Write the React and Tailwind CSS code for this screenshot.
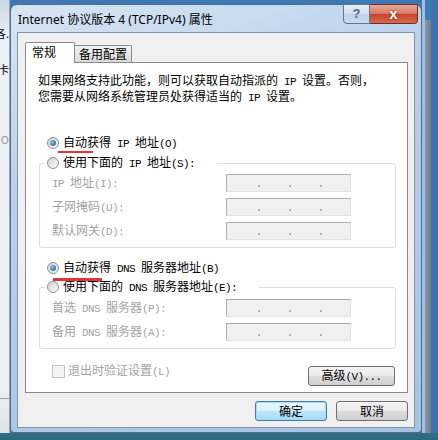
import React from 'react';

// SimSun-ish text: ascii runs are half width, CJK full width
const Txt = ({ children }) => {
  const parts = String(children).split(/([\x00-\x7F]+)/).filter(Boolean);
  return parts.map((p, i) =>
    /^[\x00-\x7F]+$/.test(p) ? (
      <span key={i} className="font-['Liberation_Mono',monospace] text-[11px] tracking-[-0.6px] whitespace-pre">
        {p}
      </span>
    ) : (
      <span key={i}>{p}</span>
    )
  );
};

const Radio = ({ checked }) => (
  <span className="w-[12px] h-[12px] rounded-full border border-[#8e8f8f] bg-[linear-gradient(135deg,#d2d2d2,#fbfbfb)] flex items-center justify-center shrink-0">
    {checked && (
      <span className="w-[6px] h-[6px] rounded-full bg-[radial-gradient(circle_at_35%_35%,#8cc3ee,#1a4f86)]" />
    )}
  </span>
);

const IpBox = () => (
  <div className="w-[125px] h-[18px] border border-[#a9acb2] border-r-[#dfe3e8] border-b-[#dfe3e8] bg-[#f0f0f0] flex pl-[2px]">
    {[0, 1, 2].map((i) => (
      <div key={i} className="w-[31px] flex justify-end items-end pb-[4px]">
        <span className="w-[2px] h-[2px] bg-[#b4b4b4]" />
      </div>
    ))}
  </div>
);

const Row = ({ label }) => (
  <div className="flex items-center h-[18px] pl-[12px]">
    <div className="w-[174px] text-[#a3a3a3]">
      <Txt>{label}</Txt>
    </div>
    <IpBox />
  </div>
);

const WinButton = ({ children, focused, className }) => (
  <button
    className={
      focused
        ? `h-[20px] rounded-[3px] border border-[#3c7fb1] bg-[linear-gradient(#eaf6fd,#d9f0fc_50%,#bee6fd_51%,#a7d9f5)] shadow-[0_0_0_1px_#a8d8f4_inset] text-black ${className}`
        : `h-[20px] rounded-[3px] border border-[#707070] bg-[linear-gradient(#f2f2f2,#ebebeb_50%,#dddddd_51%,#cfcfcf)] text-black ${className}`
    }
  >
    {children}
  </button>
);

const App = () => {
  return (
    <div className="w-[438px] h-[440px] overflow-hidden flex flex-col bg-[#3f78b2] font-['Noto_Sans_CJK_SC',sans-serif] text-[12px] leading-[14px] text-black">
      <div className="flex h-[433px]">
        {/* window behind, left edge */}
        <div className="w-[10px] bg-[linear-gradient(#c9d6e4,#eceff3_8%,#eceff3_90%,#dde3ea)] border-r border-[#9aa9ba] flex flex-col overflow-hidden">
          <div className="mt-[26px] flex justify-end whitespace-nowrap text-[11px]">网络各.</div>
          <div className="mt-[22px] flex justify-end whitespace-nowrap text-[11px]">关闭卡</div>
          <div className="mt-[56px] flex justify-end whitespace-nowrap text-[#9a9a9a] text-[11px]">O</div>
          <div className="mt-[252px] h-px bg-[#9c9c9c]" />
        </div>

        <div className="pt-[4px]">
          <div className="w-[412px] h-[429px] rounded-t-[7px] rounded-b-[4px] border border-[#4d6c90] bg-[linear-gradient(160deg,#d6e5f4,#b9d0e9_35%,#a7c3e2)] flex flex-col pb-[4px]">
            {/* title bar */}
            <div className="h-[27px] flex items-start pl-[7px] pr-[3px] shrink-0">
              <div className="pt-[8px] font-['Noto_Sans','Noto_Sans_CJK_SC',sans-serif] text-[12px] leading-[14px]">
                Internet 协议版本 4 (TCP/IPv4) 属性
              </div>
              <div className="ml-auto -mt-[1px] flex">
                <div className="w-[27px] h-[20px] rounded-bl-[4px] border border-[#5f7590] bg-[linear-gradient(#e6eef8,#d3e1f0_50%,#bfd2e8_51%,#c9dbef)] flex items-center justify-center font-['Liberation_Sans',sans-serif] font-bold text-[13px] text-[#58697e]">
                  ?
                </div>
                <div className="w-[48px] h-[20px] rounded-br-[4px] border border-l-0 border-[#6b3128] bg-[linear-gradient(#e8a899,#d9775f_50%,#c7432b_51%,#d7694d)] flex items-center justify-center font-['Liberation_Sans',sans-serif] font-bold text-[15px] text-white [text-shadow:0_0_2px_#5a1a10]">
                  x
                </div>
              </div>
            </div>

            {/* client area */}
            <div className="flex-1 mx-[6px] border border-[#7f95ad] bg-[#f0f0f0] flex flex-col pt-[9px] pl-[7px] pr-[6px]">
              {/* tabs */}
              <div className="h-[20px] flex items-end">
                <div className="w-[50px] h-[21px] -mb-[1px] relative z-10 bg-white border-x border-t border-[#898c95] rounded-t-[2px] pl-[6px] pt-[2px]">
                  常规
                </div>
                <div className="w-[57px] h-[17px] border-t border-r border-[#898c95] rounded-tr-[2px] bg-[linear-gradient(#f3f3f3,#e6e6e6_50%,#d9d9d9)] pl-[4px] pt-[1px]">
                  备用配置
                </div>
              </div>

              {/* panel */}
              <div className="h-[331px] border border-[#898c95] bg-white flex flex-col pt-[10px]">
                <div className="pl-[12px] leading-[13px]">
                  <div>
                    <Txt>如果网络支持此功能，则可以获取自动指派的 IP 设置。否则，</Txt>
                  </div>
                  <div>
                    <Txt>您需要从网络系统管理员处获得适当的 IP 设置。</Txt>
                  </div>
                </div>

                <div className="relative mt-[31px] ml-[21px] h-[14px] flex items-center gap-[4px]">
                  <Radio checked />
                  <span>
                    <Txt>自动获得 IP 地址(O)</Txt>
                  </span>
                  <span className="absolute left-[11px] top-[15px] w-[35px] h-[2px] bg-[#e0363a]" />
                </div>

                <fieldset className="mt-[6px] ml-[13px] w-[357px] border border-[#d5dfe5] rounded-[3px] pb-[7px] shadow-[1px_1px_0_#fff]">
                  <legend className="ml-[5px] pl-[2px] pr-[22px] h-[14px] bg-white">
                    <span className="flex items-center gap-[4px] h-[14px]">
                      <Radio />
                      <span>
                        <Txt>使用下面的 IP 地址(S):</Txt>
                      </span>
                    </span>
                  </legend>
                  <div className="mt-[4px] flex flex-col gap-[6px]">
                    <Row label="IP 地址(I):" />
                    <Row label="子网掩码(U):" />
                    <Row label="默认网关(D):" />
                  </div>
                </fieldset>

                <div className="relative mt-[13px] ml-[21px] h-[14px] flex items-center gap-[4px]">
                  <Radio checked />
                  <span>
                    <Txt>自动获得 DNS 服务器地址(B)</Txt>
                  </span>
                  <span className="absolute left-[6px] top-[17px] w-[49px] h-[3px] bg-[#e0363a]" />
                </div>

                <fieldset className="mt-[5px] ml-[13px] w-[357px] border border-[#d5dfe5] rounded-[3px] pb-[7px] shadow-[1px_1px_0_#fff]">
                  <legend className="ml-[5px] pl-[2px] pr-[22px] h-[14px] bg-white">
                    <span className="flex items-center gap-[4px] h-[14px]">
                      <Radio />
                      <span>
                        <Txt>使用下面的 DNS 服务器地址(E):</Txt>
                      </span>
                    </span>
                  </legend>
                  <div className="mt-[5px] flex flex-col gap-[6px]">
                    <Row label="首选 DNS 服务器(P):" />
                    <Row label="备用 DNS 服务器(A):" />
                  </div>
                </fieldset>

                <div className="mt-[15px] flex items-start pl-[26px] pr-[12px]">
                  <div className="flex items-center gap-[3px] h-[14px] text-[#a3a3a3]">
                    <span className="w-[13px] h-[13px] border border-[#c2c2c2] bg-[#f4f4f4]" />
                    <span>
                      <Txt>退出时验证设置(L)</Txt>
                    </span>
                  </div>
                  <WinButton className="ml-auto mt-[2px] w-[87px] h-[19px]">
                    <Txt>高级(V)...</Txt>
                  </WinButton>
                </div>
              </div>

              {/* dialog buttons */}
              <div className="mt-[8px] flex justify-end gap-[9px]">
                <WinButton focused className="w-[72px]">
                  确定
                </WinButton>
                <WinButton className="w-[72px]">取消</WinButton>
              </div>
            </div>
          </div>
        </div>

        {/* desktop / window behind, right edge */}
        <div className="flex-1 flex">
          <div className="w-[3px] bg-[#9fc0e2]" />
          <div className="w-[6px] mt-[20px] bg-[linear-gradient(90deg,#8f9aa5,#6f7c8a)]" />
          <div className="flex-1 bg-[#3a73ae]" />
        </div>
      </div>
      <div className="flex-1 bg-[linear-gradient(#2e6f83,#2a6a7c)]" />
    </div>
  );
};

export default App;
